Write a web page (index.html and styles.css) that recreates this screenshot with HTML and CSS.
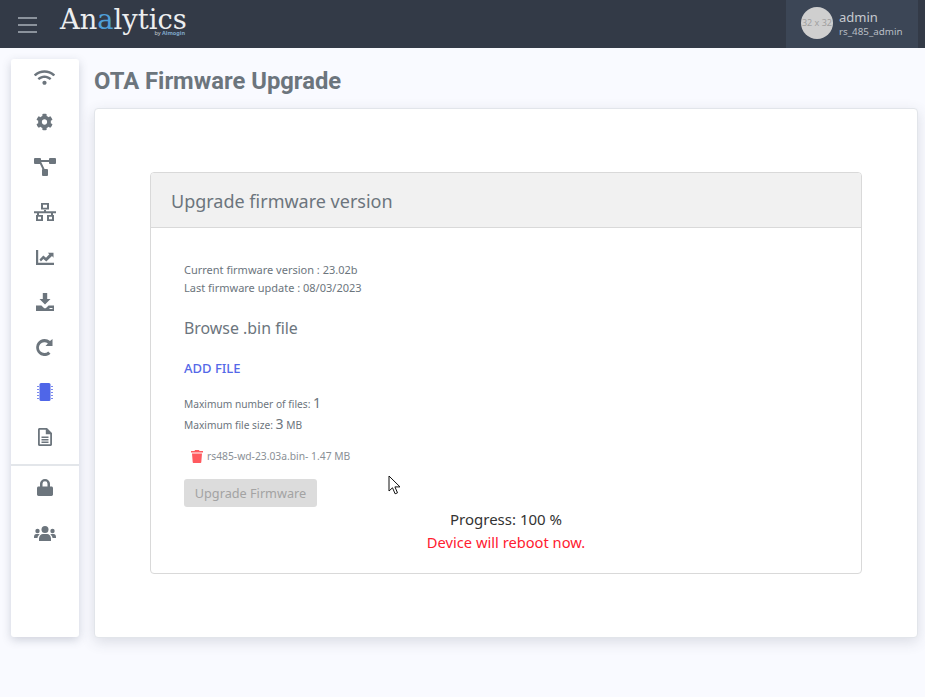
FILE: index.html
```html
<!DOCTYPE html>
<html lang="en">
<head>
<meta charset="utf-8">
<title>OTA Firmware Upgrade</title>
<link rel="stylesheet" href="styles.css">
</head>
<body>
<header class="topbar">
  <div class="burger"><span></span><span></span><span></span></div>
  <div class="logo">
    <div class="logo-word">An<span class="logo-a">a</span>lytics</div>
    <div class="logo-by">by <b>Almogin</b></div>
  </div>
  <div class="user">
    <div class="avatar">32 x 32</div>
    <div class="user-text">
      <div class="user-name">admin</div>
      <div class="user-role">rs_485_admin</div>
    </div>
  </div>
</header>
<div class="shell">
  <nav class="sidebar">
    <a class="nav-item"><svg class="ic" width="21" height="17" viewBox="0 0 640 512"><path d="M634.91 154.88C457.74-8.99 182.19-8.93 5.09 154.88c-6.66 6.16-6.79 16.59-.35 22.98l34.24 33.97c6.14 6.1 16.02 6.23 22.4.38 145.92-133.68 371.3-133.71 517.25 0 6.38 5.85 16.26 5.71 22.4-.38l34.24-33.97c6.43-6.39 6.3-16.82-.36-22.98zM320 352c-35.35 0-64 28.65-64 64s28.65 64 64 64 64-28.65 64-64-28.65-64-64-64zm202.67-83.59c-115.26-101.93-290.21-101.82-405.34 0-6.9 6.1-7.12 16.69-.57 23.15l34.44 33.99c6 5.92 15.66 6.32 22.05.8 83.95-72.57 209.74-72.41 293.49 0 6.39 5.52 16.05 5.13 22.05-.8l34.44-33.99c6.56-6.46 6.33-17.06-.56-23.15z"/></svg></a>
    <a class="nav-item"><svg class="ic" width="17" height="18" viewBox="0 0 512 512"><path d="M487.4 315.7l-42.6-24.6c4.3-23.2 4.3-47 0-70.2l42.6-24.6c4.9-2.8 7.1-8.6 5.5-14-11.1-35.6-30-67.8-54.7-94.6-3.8-4.1-10-5.1-14.8-2.3L380.8 110c-17.9-15.4-38.5-27.3-60.8-35.1V25.8c0-5.6-3.9-10.5-9.4-11.7-36.7-8.2-74.3-7.8-109.2 0-5.5 1.2-9.4 6.1-9.4 11.7V75c-22.2 7.9-42.8 19.8-60.8 35.1L88.7 85.5c-4.9-2.8-11-1.9-14.8 2.3-24.7 26.7-43.6 58.9-54.7 94.6-1.7 5.4.6 11.2 5.5 14L67.3 221c-4.3 23.2-4.3 47 0 70.2l-42.6 24.6c-4.9 2.8-7.1 8.6-5.5 14 11.1 35.6 30 67.8 54.7 94.6 3.8 4.1 10 5.1 14.8 2.3l42.6-24.6c17.9 15.4 38.5 27.3 60.8 35.1v49.2c0 5.6 3.9 10.5 9.4 11.7 36.7 8.2 74.3 7.8 109.2 0 5.5-1.2 9.4-6.1 9.4-11.7v-49.2c22.2-7.9 42.8-19.8 60.8-35.1l42.6 24.6c4.9 2.8 11 1.9 14.8-2.3 24.7-26.7 43.6-58.9 54.7-94.6 1.5-5.5-.7-11.3-5.6-14.1zM256 336c-44.1 0-80-35.9-80-80s35.9-80 80-80 80 35.9 80 80-35.9 80-80 80z"/></svg></a>
    <a class="nav-item"><svg class="ic" width="22" height="18" viewBox="0 0 22 18"><rect x="0" y="0" width="7" height="6" rx="1"/><rect x="15" y="0" width="7" height="6" rx="1"/><rect x="8" y="11" width="6" height="7" rx="1"/><path d="M6 2h10v2H6zM5.500 5l1.700-1 3.600 7.500-1.700 1z"/></svg></a>
    <a class="nav-item"><svg class="ic" width="22" height="18" viewBox="0 0 22 18"><path fill-rule="evenodd" d="M7 0h8v6.500H7zM9 1.800v2.900h4V1.800zM10 6h2v2.300h10v1.900H0V8.300h10zM2 12h7v6H2zM4 13.800v2.400h3v-2.400zM13 12h7v6h-7zM15 13.800v2.400h3v-2.400z"/><path d="M3 9h2v3H3zM17 9h2v3h-2z"/></svg></a>
    <a class="nav-item"><svg class="ic" width="18" height="15" viewBox="0 0 18 15"><path d="M0 0h2.200v12.800H18V15H0z"/><path d="M3.500 9.400 7.300 5.400l2.700 2.300 3.300-3.400-1.500-1.500H17.500v4.900L16 6.100l-5.700 5.400-2.900-2.400-2.500 2.500z"/></svg></a>
    <a class="nav-item"><svg class="ic" width="18" height="18" viewBox="0 0 18 18"><path d="M6.800 0h4.400v6h3.300L9 11.500 3.500 6h3.300z"/><path fill-rule="evenodd" d="M0 12.500h5.400L7.700 14.800c.7.700 1.900.7 2.600 0l2.300-2.300H18V18H0zM13.500 15v1h3v-1z"/></svg></a>
    <a class="nav-item"><svg class="ic" width="17" height="17" viewBox="0 0 17 17"><path d="M8.500 0c2.100 0 4 .8 5.500 2.100L16.500 0v7h-7l2.400-2.400A5.400 5.400 0 1 0 12.200 12.400l2.300 2.300A8.500 8.500 0 1 1 8.500 0z"/></svg></a>
    <a class="nav-item"><svg width="18" height="18" viewBox="0 0 18 18"><rect class="chip" x="3.500" y="0" width="11" height="18" rx="1.500"/><path class="chip-pins" d="M1 3h2v1H1zM1 6h2v1H1zM1 9h2v1H1zM1 12h2v1H1zM1 15h2v1H1zM15 3h2v1h-2zM15 6h2v1h-2zM15 9h2v1h-2zM15 12h2v1h-2zM15 15h2v1h-2z"/></svg></a>
    <a class="nav-item"><svg class="ic" width="14" height="18" viewBox="0 0 14 18"><path fill-rule="evenodd" d="M1.500 0H9l5 5v11.500c0 .8-.7 1.500-1.500 1.500h-11C.7 18 0 17.300 0 16.500v-15C0 .7.700 0 1.500 0zM1.800 1.800v14.400h10.400V6.200H7.800V1.800zM3.500 8.500h7V10h-7zM3.500 11h7v1.500h-7zM3.500 13.500h7V15h-7z"/></svg></a>
    <div class="nav-divider"></div>
    <a class="nav-item"><svg class="ic lock" width="16" height="17" viewBox="0 0 16 18" preserveAspectRatio="none"><path fill-rule="evenodd" d="M3 8V5a5 5 0 0 1 10 0v3h1.500c.8 0 1.500.7 1.500 1.500v7c0 .8-.7 1.500-1.500 1.500h-13C.7 18 0 17.300 0 16.500v-7C0 8.700.7 8 1.500 8zM5.500 8h5V5a2.500 2.500 0 0 0-5 0z"/></svg></a>
    <a class="nav-item"><svg class="ic" width="22" height="15" viewBox="0 0 22 15"><circle cx="11" cy="3.500" r="3.500"/><circle cx="3.500" cy="5" r="2.200"/><circle cx="18.500" cy="5" r="2.200"/><path d="M5 15v-2.500C5 10 7 8 9 8h4c2 0 4 2 4 4.500V15zM0 11c0-2 1-3 2.200-3h2.300c.5 0 .9.200 1.200.500C4.400 9.300 3.500 10.700 3.500 12H0zM22 11c0-2-1-3-2.200-3h-2.300c-.5 0-.9.200-1.200.500 1.300.8 2.200 2.200 2.200 3.500H22z"/></svg></a>
  </nav>
  <main class="main">
    <h1 class="page-title">OTA Firmware Upgrade</h1>
    <section class="card">
      <div class="panel">
        <div class="panel-head">Upgrade firmware version</div>
        <div class="panel-body">
          <p class="meta">Current firmware version : 23.02b</p>
          <p class="meta">Last firmware update : 08/03/2023</p>
          <h2 class="browse">Browse .bin file</h2>
          <a class="add-file">ADD FILE</a>
          <p class="limit limit-first">Maximum number of files: <span class="limit-num">1</span></p>
          <p class="limit">Maximum file size: <span class="limit-num">3</span> MB</p>
          <div class="file-row">
            <svg class="trash" width="12" height="13" viewBox="0 0 12 13"><path d="M4 0h4l.5 1H12v1.500H0V1h3.500zM1 3.500h10l-.7 8.500c0 .6-.5 1-1 1H2.700c-.5 0-1-.4-1-1z"/></svg>
            <span>rs485-wd-23.03a.bin- 1.47 MB</span>
          </div>
          <button class="upgrade" disabled>Upgrade Firmware</button>
          <div class="progress">Progress: 100 %</div>
          <div class="reboot">Device will reboot now.</div>
        </div>
      </div>
    </section>
  </main>
</div>
<svg class="cursor" width="14" height="21" viewBox="0 0 14 21"><path d="M1 1v15l3.500-3.200 2.600 6 2.400-1-2.600-5.900H12z" fill="#fff" stroke="#111" stroke-width="1"/></svg>
</body>
</html>
```
FILE: styles.css
```css
* { box-sizing: border-box; }
html, body { margin: 0; height: 100%; }
body {
  position: relative;
  height: 697px;
  overflow: hidden;
  background: #f9faff;
  font-family: "Noto Sans", sans-serif;
  color: #6c757d;
}
.topbar {
  height: 48px;
  display: flex;
  align-items: center;
  background: #333a47;
  padding: 0 7px 0 18px;
}
.burger { width: 19px; display: flex; flex-direction: column; gap: 5px; margin-top: 1px; }
.burger span { height: 2px; background: #8b929c; }
.logo { margin-left: 23px; width: 127px; height: 48px; position: relative; }
.logo-word {
  font-family: "DejaVu Serif", serif;
  font-size: 27.300px;
  line-height: 22px;
  margin-top: 9px;
  color: #eceef0;
  font-weight: 400;
  white-space: nowrap;
}
.logo-a { color: #4f9fd8; }
.logo-by {
  position: absolute;
  right: 2px;
  top: 31px;
  font-size: 5.500px;
  line-height: 5px;
  color: #c9ced4;
  white-space: nowrap;
}
.logo-by b { color: #7fa6c9; }
.user {
  margin-left: auto;
  width: 132px;
  height: 48px;
  display: flex;
  align-items: center;
  gap: 6px;
  padding: 0 0 2px 15px;
  background: #3c4656;
}
.avatar {
  width: 32px;
  height: 32px;
  border-radius: 50%;
  background: #cfcfcf;
  color: #a0a0a0;
  font-size: 9px;
  line-height: 32px;
  text-align: center;
  white-space: nowrap;
}
.user-text { padding-top: 2px; }
.user-name { font-size: 13px; line-height: 15px; color: #c6cad0; }
.user-role { font-size: 9.800px; line-height: 14px; color: #b9bec5; }
.shell {
  display: flex;
  align-items: flex-start;
  padding: 11px 8px 0 11px;
  gap: 15px;
}
.sidebar {
  width: 68px;
  height: 578px;
  flex: none;
  background: #fff;
  border-radius: 3px;
  box-shadow: 0 3px 10px rgba(60, 70, 90, .22);
  display: flex;
  flex-direction: column;
  gap: 9px;
}
.nav-item { height: 36px; flex: none; display: flex; align-items: center; justify-content: center; padding-right: 1px; }
.ic { fill: #6c757d; }
.lock { margin-bottom: 2px; }
.chip { fill: #4f66e8; }
.chip-pins { fill: #7a88ee; }
.nav-divider { height: 2px; background: #e3e6ea; margin: 0 0 -5px; flex: none; }
.main { flex: 1; min-width: 0; }
.page-title {
  margin: 8px 0 0;
  font-family: Roboto, sans-serif;
  font-size: 23.800px;
  line-height: 28px;
  font-weight: 700;
  color: #6c757d;
}
.card {
  margin-top: 13px;
  height: 530px;
  margin-right: -1px;
  background: #fff;
  border: 1px solid #e2e5ea;
  border-radius: 4px;
  box-shadow: 0 4px 14px rgba(60, 70, 90, .16);
  padding: 63px 55px 0;
}
.panel {
  height: 402px;
  border: 1px solid #d9d9d9;
  border-radius: 4px;
  overflow: hidden;
}
.panel-head {
  height: 55px;
  background: #f1f1f1;
  border-bottom: 1px solid #d9d9d9;
  padding-left: 20px;
  font-size: 18px;
  line-height: 56px;
  color: #6c757d;
}
.panel-body { padding: 33px 33px 0; }
.meta { margin: 0; font-size: 11px; line-height: 18px; }
.browse { margin: 20px 0 0; font-size: 15.900px; line-height: 22px; font-weight: 400; }
.add-file { display: block; margin-top: 20px; font-size: 13px; line-height: 18px; font-weight: 500; color: #5468e8; }
.limit { margin: 0; font-size: 10.200px; line-height: 21px; }
.limit-first { margin-top: 17px; }
.limit-num { font-size: 14px; line-height: 14px; }
.file-row { display: flex; align-items: center; gap: 4px; margin: 12px 0 0 7px; font-size: 10.300px; line-height: 16px; color: #8a9096; }
.trash { fill: #ff5a5f; }
.upgrade {
  display: block;
  margin-top: 15px;
  width: 133px;
  height: 28px;
  border: 0;
  border-radius: 3px;
  background: #dcdcdc;
  color: #a3a3a3;
  font: 12.700px/28px "Noto Sans", sans-serif;
  padding: 0;
}
.progress { margin: 2px -33px 0; text-align: center; font-size: 15px; line-height: 20px; color: #333; }
.reboot { margin: 3px -33px 0; text-align: center; font-size: 14.700px; line-height: 20px; color: #ff2030; }
.cursor { position: absolute; left: 388px; top: 475px; }
```
